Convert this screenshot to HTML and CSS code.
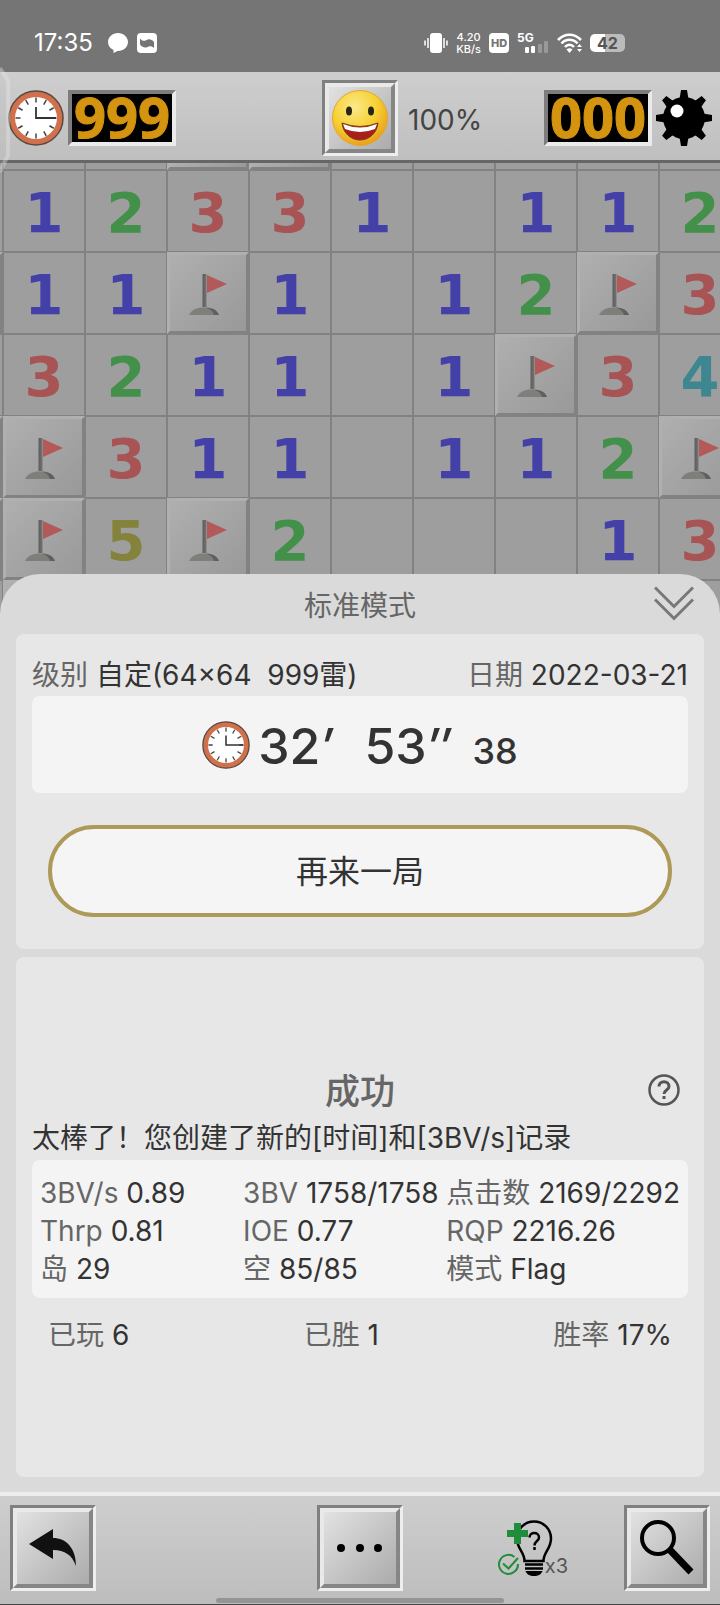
FILE: index.html
```html
<!DOCTYPE html>
<html lang="zh-CN">
<head>
    <meta charset="UTF-8">
    <meta name="viewport" content="width=device-width, initial-scale=1.0">
    <title>扫雷</title>
    <link rel="stylesheet" href="styles.css">
</head>
<body>

<!-- Shared icons -->
<svg class="sprite" width="0" height="0">
    <defs>
        <linearGradient id="poleFill" x1="0" x2="1" y1="0" y2="0">
            <stop offset="0" stop-color="#5c5c5c"/>
            <stop offset="1" stop-color="#747474"/>
        </linearGradient>
        <radialGradient id="faceFill" cx="0.4" cy="0.3" r="0.75">
            <stop offset="0" stop-color="#fbe98c"/>
            <stop offset="0.55" stop-color="#f6d032"/>
            <stop offset="1" stop-color="#e79a1c"/>
        </radialGradient>
    </defs>
    <symbol id="clock" viewBox="0 0 56 56">
        <circle cx="28" cy="28" r="27" fill="#d0714c" stroke="#5a4a42" stroke-width="1.5"/>
        <circle cx="28" cy="28" r="21" fill="#fff"/>
        <g stroke="#444" stroke-width="1.5">
            <path d="M28 7.500v5M28 43.500v5M7.500 28h5M43.500 28h5"/>
            <path d="M28 7.500v5M28 43.500v5M7.500 28h5M43.500 28h5" transform="rotate(30 28 28)"/>
            <path d="M28 7.500v5M28 43.500v5M7.500 28h5M43.500 28h5" transform="rotate(60 28 28)"/>
        </g>
        <path d="M28 17v11h20" fill="none" stroke="#333" stroke-width="1.800"/>
    </symbol>
    <symbol id="flag" viewBox="0 0 40 42">
        <path d="M1 41C4 35 10 33.500 16 33.500S28 35 31 41z" fill="#7f7e7a"/>
        <path d="M18 33.500C25 34 29 36 31 41h-5C25 37 22 35 18 33.500z" fill="#5f5f5f"/>
        <path d="M14.500 0h4v33h-4z" fill="url(#poleFill)"/>
        <path d="M19 1l20 9-20 9z" fill="#b25a5a"/>
    </symbol>
</svg>

<div class="app">
    <div class="status">
        <span class="time">17:35</span>
        <svg class="chat" width="20" height="20" viewBox="0 0 20 20"><path d="M10 0C4.500 0 0 4 0 9c0 3.500 2 6.500 5.500 8v3l4-2H10c5.500 0 10-4 10-9s-4.500-9-10-9z" fill="#fff"/></svg>
        <svg width="20" height="20" viewBox="0 0 20 20"><rect width="20" height="20" rx="4" fill="#fff"/><path d="M3 5.500c2 2.500 4 3 6.500 1.500S15 6.500 17 9v6c-2-2-4-2.500-6.500-1S5 14 3 11.500z" fill="#757575"/></svg>
        <div class="status-right">
            <svg width="24" height="20" viewBox="0 0 24 20"><rect x="6" width="12" height="20" rx="3" fill="#fff"/><path d="M4 5v10M1 7.500v5M20 5v10M23 7.500v5" stroke="#fff" stroke-width="1.500"/></svg>
            <div class="speed"><span>4.20</span><span>KB/s</span></div>
            <span class="hd">HD</span>
            <div class="signal">
                <span>5G</span>
                <svg width="24" height="12" viewBox="0 0 24 12"><rect y="6" width="4" height="6" rx="1" fill="#fff"/><rect x="6" y="5" width="4" height="7" rx="1" fill="#fff"/><rect x="13" y="3" width="4" height="9" rx="1" fill="#999"/><rect x="19" width="4" height="12" rx="1" fill="#999"/></svg>
            </div>
            <svg width="25" height="20" viewBox="0 0 25 20"><g fill="none" stroke="#fff" stroke-width="2.600"><path d="M1 7C7.500 0 17.500 0 24 7"/><path d="M4.500 10.500c4.500-5 11.500-5 16 0"/><path d="M8 14c2.500-3 6.500-3 9 0"/></g><path d="M9.500 16.500q3-2.500 6 0l-3 3.500z" fill="#fff"/><path d="M20 14l2.500-3 2.500 3zM20 16l2.500 3 2.500-3z" fill="#fff"/></svg>
            <span class="battery">42</span>
        </div>
    </div>

    <header>
        <div class="counter-group">
            <svg width="56" height="56"><use href="#clock"/></svg>
            <span class="counter">999</span>
        </div>
        <button class="bevel face" aria-label="重新开始">
            <span>
                <svg width="56" height="56" viewBox="0 0 56 56">
                    <circle cx="28" cy="28" r="27.500" fill="url(#faceFill)" stroke="#e3a72a"/>
                    <ellipse cx="17" cy="21" rx="3" ry="4.500" fill="#2b2413"/>
                    <ellipse cx="39" cy="21" rx="3" ry="4.500" fill="#2b2413"/>
                    <path d="M10 33q18 7 36 0c-1 10-9 17-18 17s-17-7-18-17z" fill="#a8201c" stroke="#7a3a10"/>
                    <path d="M11 34q17 7 34 0l-2 5q-15 6-30 0z" fill="#fff"/>
                </svg>
            </span>
        </button>
        <div class="header-right">
            <span class="percent">100%</span>
            <div class="counter-group">
                <span class="counter">000</span>
                <svg width="56" height="56" viewBox="0 0 56 56">
                    <circle cx="28" cy="28" r="21"/>
                    <path id="spike" d="M23 12l2-12h6l2 12zM23 44l2 12h6l2-12zM12 23L0 25v6l12 2zM44 23l12 2v6l-12 2z"/>
                    <use href="#spike" transform="rotate(45 28 28)"/>
                    <circle cx="21" cy="21" r="6.500" fill="#fff"/>
                </svg>
            </div>
        </div>
        <svg class="edge-handle" width="12" height="112" viewBox="0 0 12 112"><path d="M0 4L8 17v74L0 108" fill="rgba(190,190,190,0.2)" stroke="rgba(235,235,235,0.35)" stroke-width="4"/></svg>
    </header>

    <div class="board" id="board"></div>

    <main class="sheet">
        <div class="sheet-head">
            <h1>标准模式</h1>
            <button class="collapse" aria-label="收起">
                <svg width="40" height="36" viewBox="0 0 40 36" fill="none" stroke="#777" stroke-width="3"><path d="M1 1.500l19 19 19-19M1 13.500l19 19 19-19"/></svg>
            </button>
        </div>

        <section class="card">
            <div class="info">
                <span><i>级别</i> <b class="level">自定(64×64&nbsp; 999雷)</b></span>
                <span><i>日期</i> <b>2022-03-21</b></span>
            </div>
            <div class="box timer">
                <svg width="48" height="48"><use href="#clock"/></svg>
                <span class="minutes">32<em>′</em></span>
                <span>53<em>″</em></span>
                <small>38</small>
            </div>
            <button class="again">再来一局</button>
        </section>

        <section class="card result">
            <div class="result-head">
                <h2>成功</h2>
                <button class="help" aria-label="帮助">
                    <svg width="32" height="32" viewBox="0 0 32 32" fill="none" stroke="#555" stroke-width="2.500"><circle cx="16" cy="16" r="14.500"/><path d="M11 12.500c0-6.500 10-6.500 10 0 0 3.500-5 3.500-5 7.500M16 22v3" stroke-width="3"/></svg>
                </button>
            </div>
            <p class="message">太棒了！您创建了新的[时间]和[3BV/s]记录</p>
            <div class="box stats">
                <span><i>3BV/s</i> <b>0.89</b></span>
                <span><i>3BV</i> <b>1758/1758</b></span>
                <span><i>点击数</i> <b>2169/2292</b></span>
                <span><i>Thrp</i> <b>0.81</b></span>
                <span><i>IOE</i> <b>0.77</b></span>
                <span><i>RQP</i> <b>2216.26</b></span>
                <span><i>岛</i> <b>29</b></span>
                <span><i>空</i> <b>85/85</b></span>
                <span><i>模式</i> <b>Flag</b></span>
            </div>
            <div class="totals">
                <span><i>已玩</i> <b>6</b></span>
                <span><i>已胜</i> <b>1</b></span>
                <span><i>胜率</i> <b>17%</b></span>
            </div>
        </section>
    </main>

    <nav class="toolbar">
        <button class="bevel" aria-label="返回">
            <span><svg width="48" height="40" viewBox="0 0 48 40"><path d="M0 16L24 1v9c13 0 23 10 23 28-4-11-11-16-23-16v9z" fill="#111"/></svg></span>
        </button>
        <button class="bevel" aria-label="更多">
            <span><svg width="48" height="10" viewBox="0 0 48 10"><circle cx="5" cy="5" r="4"/><circle cx="24" cy="5" r="4"/><circle cx="42" cy="5" r="4"/></svg></span>
        </button>
        <div class="toolbar-right">
            <button class="hint" aria-label="提示">
                <svg width="55" height="56" viewBox="0 0 55 56" fill="none">
                    <path d="M26.500 41C26.500 32 19 29 19 18.500a17 17 0 0 1 34 0C53 29 45.500 32 45.500 41z" stroke="#000" stroke-width="2.500"/>
                    <path d="M27 44.500h18M27 48.500h18" stroke="#000" stroke-width="2.500"/>
                    <path d="M27.500 51h17c-1 3-4 5-8.500 5s-7.500-2-8.500-5z" fill="#000"/>
                    <path d="M31.500 17.500c0-6 9.500-6 9.500 0 0 3.500-4.500 3.500-4.500 8M36.500 27v3" stroke="#000" stroke-width="2.500"/>
                    <path d="M16 3h7v7h7v7h-7v7h-7v-7H9v-7h7z" fill="#1f8d3c"/>
                    <path d="M16.500 37a9.500 9.500 0 1 0 3.500 7M5 43.500l5.500 5L20 38" stroke="#1f8d3c" stroke-width="2"/>
                </svg>
                <span>x3</span>
            </button>
            <button class="bevel" aria-label="缩放">
                <span><svg width="56" height="56" viewBox="0 0 56 56" fill="none" stroke="#000"><circle cx="19" cy="18" r="16" stroke-width="4"/><path d="M30 29l22 23" stroke-width="7"/></svg></span>
            </button>
        </div>
        <div class="home-bar"></div>
    </nav>
</div>

<script>
    // F = flag, # = covered, . = empty; first row and column are cut off by the viewport
    const rows = [
        "...##.....",
        ".12331.112",
        "#11F1.12F3",
        ".3211.1F34",
        "#F311.112F",
        "#F5F2...13",
        ".##......."
    ];

    const board = document.getElementById("board");

    rows.join("").split("").forEach((value) => {
        const cell = document.createElement("div");
        cell.className = "cell";
        if (value === "F" || value === "#") {
            cell.classList.add("covered");
        }
        if (value === "F") {
            cell.innerHTML = '<svg width="40" height="42"><use href="#flag"/></svg>';
        } else if (value >= "1" && value <= "8") {
            cell.classList.add("n" + value);
            cell.textContent = value;
        }
        board.appendChild(cell);
    });
</script>

</body>
</html>
```

FILE: styles.css
```css
* {
    box-sizing: border-box;
}

body {
    margin: 0;
    font-family: Inter, "Noto Sans CJK SC", sans-serif;
    font-size: 28px;
    color: #333;
    background-color: #757575;
}

button {
    padding: 0;
    border: none;
    background: none;
    font-family: inherit;
    color: inherit;
    cursor: pointer;
}

svg {
    display: block;
    flex: none;
}

i {
    font-style: normal;
    color: #666;
}

b {
    font-weight: 400;
}

.sprite {
    position: absolute;
}

.app {
    display: flex;
    flex-direction: column;
    min-height: 100vh;
    overflow: hidden;
}

/* Status bar */
.status {
    display: flex;
    align-items: center;
    gap: 9px;
    height: 72px;
    padding: 13px 95px 0 34px;
    color: #fff;
}

.time {
    margin-right: 6px;
    font-size: 24px;
}

.status-right {
    display: flex;
    align-items: center;
    gap: 8px;
    margin-left: auto;
}

.speed {
    display: flex;
    flex-direction: column;
    font-size: 11px;
    font-weight: 500;
    line-height: 12px;
    text-align: center;
}

.hd {
    width: 20px;
    border-radius: 4px;
    background-color: #fff;
    color: #757575;
    font-size: 11px;
    font-weight: 800;
    line-height: 20px;
    text-align: center;
}

.signal {
    width: 32px;
    font-size: 12px;
    font-weight: 700;
    line-height: 10px;
}

.signal svg {
    margin: -2px 0 0 8px;
}

.battery {
    width: 35px;
    border-radius: 5px;
    background: linear-gradient(90deg, #fff 42%, #bbb 42%);
    color: #555;
    font-size: 16px;
    font-weight: 700;
    line-height: 18px;
    text-align: center;
}

/* Top bar */
header {
    position: relative;
    display: grid;
    grid-template-columns: 1fr auto 1fr;
    align-items: center;
    height: 91px;
    padding: 4px 8px 0;
    border-bottom: 3px solid #666;
    background: linear-gradient(#cecece, #bfbfbf);
}

.counter-group {
    display: flex;
    gap: 4px;
}

.counter {
    width: 108px;
    height: 56px;
    border: 4px solid;
    border-color: #7d7d7d #ebebeb #ebebeb #7d7d7d;
    background-color: #000;
    color: #d4940f;
    font-family: "Noto Sans", sans-serif;
    font-size: 56px;
    font-weight: 700;
    line-height: 44px;
    text-align: center;
    -webkit-text-stroke: 1px #d4940f;
}

.header-right {
    display: flex;
    align-items: center;
    justify-content: space-between;
    padding-left: 10px;
}

.percent {
    padding-top: 4px;
    color: #444;
}

.edge-handle {
    position: absolute;
    top: -8px;
    left: 0;
}

.bevel {
    display: block;
    width: 86px;
    height: 86px;
    border: 3px solid;
    border-color: #808080 #eee #eee #808080;
}

.bevel > span {
    display: flex;
    align-items: center;
    justify-content: center;
    height: 100%;
    border: 4px solid;
    border-color: #e9e9e9 #868686 #868686 #e9e9e9;
    background: linear-gradient(135deg, #e2e2e2, #ababab);
}

.face {
    width: 76px;
    height: 76px;
}

/* Mine field */
.board {
    display: grid;
    grid-template-columns: 3px repeat(9, 82px);
    grid-template-rows: 7px repeat(5, 82px) 43px;
    background-color: #9e9e9e;
}

.cell {
    display: flex;
    align-items: center;
    justify-content: center;
    overflow: hidden;
    padding-top: 4px;
    border: 1px solid #828282;
    background-color: #9e9e9e;
    font-family: "DejaVu Sans", sans-serif;
    font-size: 56px;
    font-weight: 700;
    line-height: 80px;
}

.cell:nth-child(-n+10) {
    border-top: none;
}

.cell:nth-child(10n+1) {
    border-left: none;
}

.covered {
    border-width: 3px;
    border-color: #b0b0b0 #828282 #828282 #b0b0b0;
    background: linear-gradient(135deg, #afafaf, #999);
}

.n1 { color: #4340a8; }
.n2 { color: #43904a; }
.n3 { color: #a85455; }
.n4 { color: #3f8790; }
.n5 { color: #85823c; }

/* Result sheet */
.sheet {
    position: relative;
    display: flex;
    flex: 1;
    flex-direction: column;
    gap: 8px;
    margin-top: -49px;
    padding: 0 16px 15px;
    border-radius: 40px 40px 0 0;
    background-color: #dadada;
}

.sheet-head {
    position: relative;
    display: flex;
    align-items: center;
    justify-content: center;
    height: 60px;
    margin-bottom: -8px;
}

h1 {
    margin: 0;
    font-size: 28px;
    font-weight: 400;
    color: #666;
}

.collapse {
    position: absolute;
    top: 12px;
    right: 10px;
}

.card {
    padding: 20px 16px 32px;
    border-radius: 8px;
    background-color: #e7e7e7;
}

.info {
    display: flex;
    justify-content: space-between;
    line-height: 42px;
    white-space: nowrap;
}

.level {
    white-space: pre;
}

.box {
    border-radius: 8px;
    background-color: #f4f4f4;
}

.timer {
    display: flex;
    align-items: baseline;
    justify-content: center;
    height: 97px;
    font-size: 50px;
    font-weight: 500;
    line-height: 100px;
}

.timer svg {
    align-self: center;
    margin-right: 8px;
}

.timer .minutes {
    margin-right: 32px;
}

.timer small {
    margin-left: 22px;
    font-size: 36px;
}

.again {
    display: block;
    width: calc(100% - 32px);
    height: 92px;
    margin: 32px auto 0;
    padding-bottom: 4px;
    border: 4px solid #ad9a58;
    border-radius: 46px;
    background-color: #f5f5f5;
    font-size: 32px;
}

.result {
    display: flex;
    flex: 1;
    flex-direction: column;
    justify-content: center;
    padding: 0 16px 16px;
}

.result-head {
    position: relative;
    line-height: 52px;
    text-align: center;
}

h2 {
    margin: 0;
    font-size: 35px;
    font-weight: 500;
    color: #666;
}

.help {
    position: absolute;
    top: 9px;
    right: 8px;
}

.message {
    margin: 0;
    line-height: 43px;
}

.stats {
    display: grid;
    grid-template-columns: 1fr 1fr auto;
    padding: 14px 8px 10px;
    line-height: 38px;
    white-space: nowrap;
}

.totals {
    display: flex;
    justify-content: space-between;
    margin-top: 18px;
    padding: 0 16px;
    line-height: 38px;
}

/* Bottom bar */
.toolbar {
    position: relative;
    display: grid;
    grid-template-columns: 1fr auto 1fr;
    height: 113px;
    padding: 9px 10px 0;
    border-top: 4px solid #ededed;
    border-bottom: 1px solid #444;
    background: linear-gradient(#cecece, #bdbdbd);
}

.toolbar-right {
    display: flex;
    align-items: center;
    justify-content: space-between;
    height: 86px;
    padding-left: 95px;
}

.hint {
    position: relative;
    width: 70px;
}

.hint span {
    position: absolute;
    right: 0;
    bottom: 0;
    color: #555;
    font-size: 20px;
    line-height: 20px;
}

.home-bar {
    position: absolute;
    bottom: 1px;
    left: 30%;
    width: 40%;
    height: 5px;
    border-radius: 3px;
    background-color: #959595;
}
```
